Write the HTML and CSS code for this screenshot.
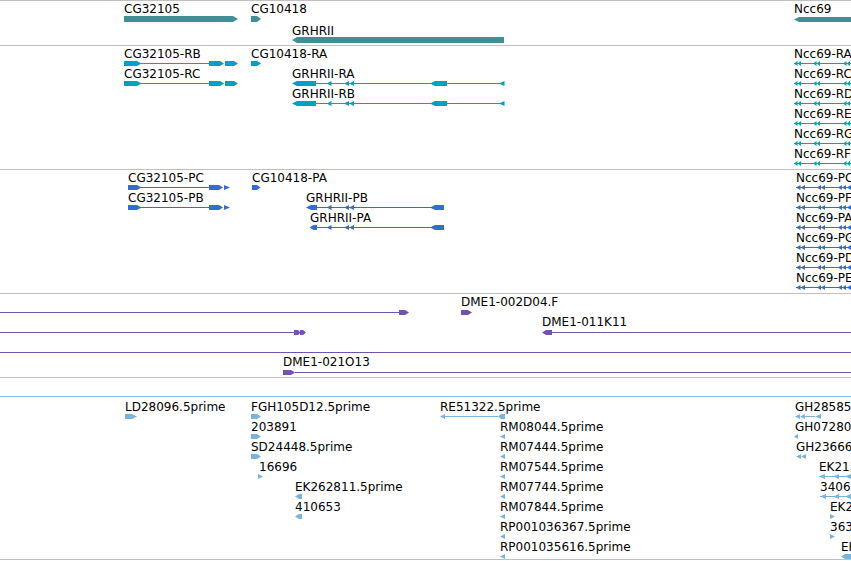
FILE: index.html
```html
<!DOCTYPE html>
<html lang="en">
<head>
<meta charset="utf-8">
<title>Genome browser tracks</title>
<link rel="stylesheet" href="styles.css">
</head>
<body>
<div class="panel">

  <section class="track track-genes">
    <svg class="canvas" width="851" height="44" viewBox="0 1 851 44">
      <g class="gene">
        <polygon points="124,16 233,16 238,19 233,22 124,22"/>
        <polygon points="251,16 257,16 261,19 257,22 251,22"/>
        <polygon points="292,40 297,37 504,37 504,43 297,43"/>
        <polygon points="794,19.5 799,17 851,17 851,22 799,22"/>
      </g>
      <text class="lbl" x="124" y="13">CG32105</text>
      <text class="lbl" x="251" y="13">CG10418</text>
      <text class="lbl" x="292" y="35">GRHRII</text>
      <text class="lbl" x="794" y="13">Ncc69</text>
    </svg>
  </section>

  <section class="track track-transcripts">
    <svg class="canvas" width="851" height="123" viewBox="0 46 851 123">
      <defs>
        <g id="tx-cg32105">
          <polygon points="124,-2 137,-2 141.5,0.5 137,3 124,3"/>
          <rect x="141" y="0" width="68" height="1"/>
          <polygon points="209,-2 220,-2 224,0.5 220,3 209,3"/>
          <polygon points="225,-2 234,-2 238,0.5 234,3 225,3"/>
        </g>
        <g id="tx-grhrii">
          <rect x="316" y="0" width="188" height="1"/>
          <polygon points="292,0.5 297,-2 316,-2 316,3 297,3"/>
          <polygon points="326.5,0.5 331.5,-2 331.5,3"/>
          <polygon points="344,0.5 349,-2 349,3"/>
          <polygon points="349,0.5 354,-2 354,3"/>
          <polygon points="430,0.5 435,-2 447,-2 447,3 435,3"/>
          <polygon points="499,0.5 504.5,-2 504.5,3"/>
        </g>
        <g id="tx-ncc69">
          <rect x="794" y="0" width="57" height="1"/>
          <polygon points="794,0.5 797.5,-2 797.5,3"/>
          <polygon points="797.5,0.5 801,-2 801,3"/>
          <polygon points="813,0.5 816.5,-2 816.5,3"/>
          <polygon points="816.5,0.5 820,-2 820,3"/>
          <polygon points="843,0.5 846.5,-2 846.5,3"/>
          <polygon points="846.5,0.5 850,-2 850,3"/>
        </g>
      </defs>
      <g class="tx">
        <use href="#tx-cg32105" transform="translate(0,63)"/>
        <use href="#tx-cg32105" transform="translate(0,83)"/>
        <polygon points="251,61 257,61 261,63.5 257,66 251,66"/>
        <use href="#tx-grhrii" transform="translate(0,83)"/>
        <use href="#tx-grhrii" transform="translate(0,103)"/>
        <use href="#tx-ncc69" transform="translate(0,63)"/>
        <use href="#tx-ncc69" transform="translate(0,83)"/>
        <use href="#tx-ncc69" transform="translate(0,103)"/>
        <use href="#tx-ncc69" transform="translate(0,123)"/>
        <use href="#tx-ncc69" transform="translate(0,143)"/>
        <use href="#tx-ncc69" transform="translate(0,163)"/>
      </g>
      <text class="lbl" x="124" y="58">CG32105-RB</text>
      <text class="lbl" x="124" y="78">CG32105-RC</text>
      <text class="lbl" x="251" y="58">CG10418-RA</text>
      <text class="lbl" x="292" y="78">GRHRII-RA</text>
      <text class="lbl" x="292" y="98">GRHRII-RB</text>
      <text class="lbl" x="794" y="58">Ncc69-RA</text>
      <text class="lbl" x="794" y="78">Ncc69-RC</text>
      <text class="lbl" x="794" y="98">Ncc69-RD</text>
      <text class="lbl" x="794" y="118">Ncc69-RE</text>
      <text class="lbl" x="794" y="138">Ncc69-RG</text>
      <text class="lbl" x="794" y="158">Ncc69-RF</text>
    </svg>
  </section>

  <section class="track track-proteins">
    <svg class="canvas" width="851" height="123" viewBox="0 170 851 123">
      <defs>
        <g id="pr-cg32105">
          <polygon points="128,-2 137,-2 141.5,0.5 137,3 128,3"/>
          <rect x="141" y="0" width="68" height="1"/>
          <polygon points="209,-2 219,-2 223,0.5 219,3 209,3"/>
          <polygon points="224,-2 230,0.5 224,3"/>
        </g>
        <g id="pr-grhrii">
          <rect x="317" y="0" width="127" height="1"/>
          <polygon points="326.5,0.5 331.5,-2 331.5,3"/>
          <polygon points="344,0.5 349,-2 349,3"/>
          <polygon points="349,0.5 354,-2 354,3"/>
          <polygon points="430,0.5 435,-2 444,-2 444,3 435,3"/>
        </g>
        <g id="pr-ncc69">
          <rect x="796" y="0" width="55" height="1"/>
          <polygon points="796,0.5 800.5,-2 800.5,3"/>
          <polygon points="800.5,0.5 805,-2 805,3"/>
          <polygon points="817,0.5 821,-2 821,3"/>
          <polygon points="821,0.5 825,-2 825,3"/>
          <polygon points="838,0.5 842,-2 842,3"/>
          <polygon points="842,0.5 846,-2 846,3"/>
          <polygon points="847,0.5 851,-2 851,3"/>
        </g>
      </defs>
      <g class="pr">
        <use href="#pr-cg32105" transform="translate(0,187)"/>
        <use href="#pr-cg32105" transform="translate(0,207)"/>
        <polygon points="252,185 257,185 260.5,187.5 257,190 252,190"/>
        <use href="#pr-grhrii" transform="translate(0,207)"/>
        <polygon points="306,207.5 311,205 317,205 317,210 311,210"/>
        <use href="#pr-grhrii" transform="translate(0,227)"/>
        <polygon points="309.5,227.5 313.5,225 317,225 317,230 313.5,230"/>
        <use href="#pr-ncc69" transform="translate(0,187)"/>
        <use href="#pr-ncc69" transform="translate(0,207)"/>
        <use href="#pr-ncc69" transform="translate(0,227)"/>
        <use href="#pr-ncc69" transform="translate(0,247)"/>
        <use href="#pr-ncc69" transform="translate(0,267)"/>
        <use href="#pr-ncc69" transform="translate(0,287)"/>
      </g>
      <text class="lbl" x="128" y="182">CG32105-PC</text>
      <text class="lbl" x="128" y="202">CG32105-PB</text>
      <text class="lbl" x="252" y="182">CG10418-PA</text>
      <text class="lbl" x="306" y="202">GRHRII-PB</text>
      <text class="lbl" x="310" y="222">GRHRII-PA</text>
      <text class="lbl" x="796" y="182">Ncc69-PC</text>
      <text class="lbl" x="796" y="202">Ncc69-PF</text>
      <text class="lbl" x="796" y="222">Ncc69-PA</text>
      <text class="lbl" x="796" y="242">Ncc69-PG</text>
      <text class="lbl" x="796" y="262">Ncc69-PD</text>
      <text class="lbl" x="796" y="282">Ncc69-PE</text>
    </svg>
  </section>

  <section class="track track-clones">
    <svg class="canvas" width="851" height="83" viewBox="0 294 851 83">
      <g class="cl">
        <rect x="0" y="312" width="400" height="1"/>
        <polygon points="399,310 405,310 409,312.5 405,315 399,315"/>
        <polygon points="461,310 468,310 472,312.5 468,315 461,315"/>
        <rect x="0" y="332" width="294" height="1"/>
        <polygon points="294,330 298,330 300.5,332.5 298,335 294,335"/>
        <polygon points="300,330 303,330 306,332.5 303,335 300,335"/>
        <polygon points="542,332.5 546,330 552,330 552,335 546,335"/>
        <rect x="552" y="332" width="299" height="1"/>
        <rect x="0" y="352" width="851" height="1"/>
        <polygon points="283,370 291,370 295,372.5 291,375 283,375"/>
        <rect x="295" y="372" width="556" height="1"/>
      </g>
      <text class="lbl" x="461" y="306">DME1-002D04.F</text>
      <text class="lbl" x="542" y="326">DME1-011K11</text>
      <text class="lbl" x="283" y="366">DME1-021O13</text>
    </svg>
  </section>

  <section class="track track-empty"></section>

  <section class="track track-est">
    <svg class="canvas" width="851" height="162" viewBox="0 397 851 162">
      <g class="est">
        <polygon points="125,414 132,414 137,416.5 132,419 125,419"/>
        <polygon points="251,414 257,414 261,416.5 257,419 251,419"/>
        <polygon points="251,434 257,434 261,436.5 257,439 251,439"/>
        <polygon points="251,454 257,454 261,456.5 257,459 251,459"/>
        <polygon points="258,474 263,476.5 258,479"/>
        <polygon points="295,496.5 299,494 302,494 302,499 299,499"/>
        <polygon points="295,516.5 299,514 302,514 302,519 299,519"/>

        <polygon points="440,416.5 445,414 445,419"/>
        <rect x="445" y="416" width="53" height="1"/>
        <polygon points="498,416.5 501,414 505,414 505,419 501,419"/>
        <polygon points="500,436.5 505,434 505,439"/>
        <polygon points="500,456.5 505,454 505,459"/>
        <polygon points="500,476.5 505,474 505,479"/>
        <polygon points="500,496.5 505,494 505,499"/>
        <polygon points="500,516.5 505,514 505,519"/>
        <polygon points="500,536.5 505,534 505,539"/>
        <polygon points="500,556.5 505,554 505,559"/>

        <polygon points="795,416.5 800,414 800,419"/>
        <polygon points="800,416.5 805,414 805,419"/>
        <rect x="805" y="416" width="10" height="1"/>
        <polygon points="815,416.5 821,414 821,419"/>
        <polygon points="794,436.5 798,434 798,439"/>
        <polygon points="796,456.5 801,454 801,459"/>
        <polygon points="801,456.5 806,454 806,459"/>
        <rect x="819" y="476" width="32" height="1"/>
        <polygon points="819,476.5 825,474 825,479"/>
        <polygon points="833,476.5 839,474 839,479"/>
        <polygon points="845,476.5 851,474 851,479"/>
        <rect x="820" y="496" width="31" height="1"/>
        <polygon points="820,496.5 826,494 826,499"/>
        <polygon points="833,496.5 839,494 839,499"/>
        <polygon points="845,496.5 851,494 851,499"/>
        <polygon points="830,514 835,516.5 830,519"/>
        <polygon points="830,534 835,536.5 830,539"/>
        <polygon points="841,556.5 845,554 851,554 851,559 845,559"/>
      </g>
      <text class="lbl" x="125" y="411">LD28096.5prime</text>
      <text class="lbl" x="251" y="411">FGH105D12.5prime</text>
      <text class="lbl" x="251" y="431">203891</text>
      <text class="lbl" x="251" y="451">SD24448.5prime</text>
      <text class="lbl" x="259" y="471">16696</text>
      <text class="lbl" x="295" y="491">EK262811.5prime</text>
      <text class="lbl" x="295" y="511">410653</text>
      <text class="lbl" x="440" y="411">RE51322.5prime</text>
      <text class="lbl" x="500" y="431">RM08044.5prime</text>
      <text class="lbl" x="500" y="451">RM07444.5prime</text>
      <text class="lbl" x="500" y="471">RM07544.5prime</text>
      <text class="lbl" x="500" y="491">RM07744.5prime</text>
      <text class="lbl" x="500" y="511">RM07844.5prime</text>
      <text class="lbl" x="500" y="531">RP001036367.5prime</text>
      <text class="lbl" x="500" y="551">RP001035616.5prime</text>
      <text class="lbl" x="795" y="411">GH28585.5prime</text>
      <text class="lbl" x="795" y="431">GH07280.5prime</text>
      <text class="lbl" x="796" y="451">GH23666.5prime</text>
      <text class="lbl" x="819" y="471">EK213396.5prime</text>
      <text class="lbl" x="820" y="491">340614</text>
      <text class="lbl" x="830" y="511">EK262808.5prime</text>
      <text class="lbl" x="830" y="531">363218</text>
      <text class="lbl" x="841" y="551">EK262817.5prime</text>
    </svg>
  </section>

</div>
</body>
</html>
```

FILE: styles.css
```css
html, body {
  margin: 0;
  padding: 0;
  background: #ffffff;
}

body {
  width: 851px;
  height: 561px;
  overflow: hidden;
  font-family: "DejaVu Sans", sans-serif;
}

.panel {
  display: flex;
  flex-direction: column;
  width: 851px;
}

.track {
  border-top: 1px solid #c0c0c0;
}

.track-empty {
  height: 18px;
}

.track-est {
  border-top-color: #8dc1e3;
  border-bottom: 1px solid #c0c0c0;
}

.canvas {
  display: block;
  overflow: hidden;
}

.lbl {
  font-family: "DejaVu Sans", sans-serif;
  font-size: 12px;
  fill: #000000;
}

.gene { fill: #408f94; }
.tx   { fill: #00a0c4; }
.pr   { fill: #336ecc; }
.cl   { fill: #7254aa; }
.est  { fill: #7ab3dc; }
```
